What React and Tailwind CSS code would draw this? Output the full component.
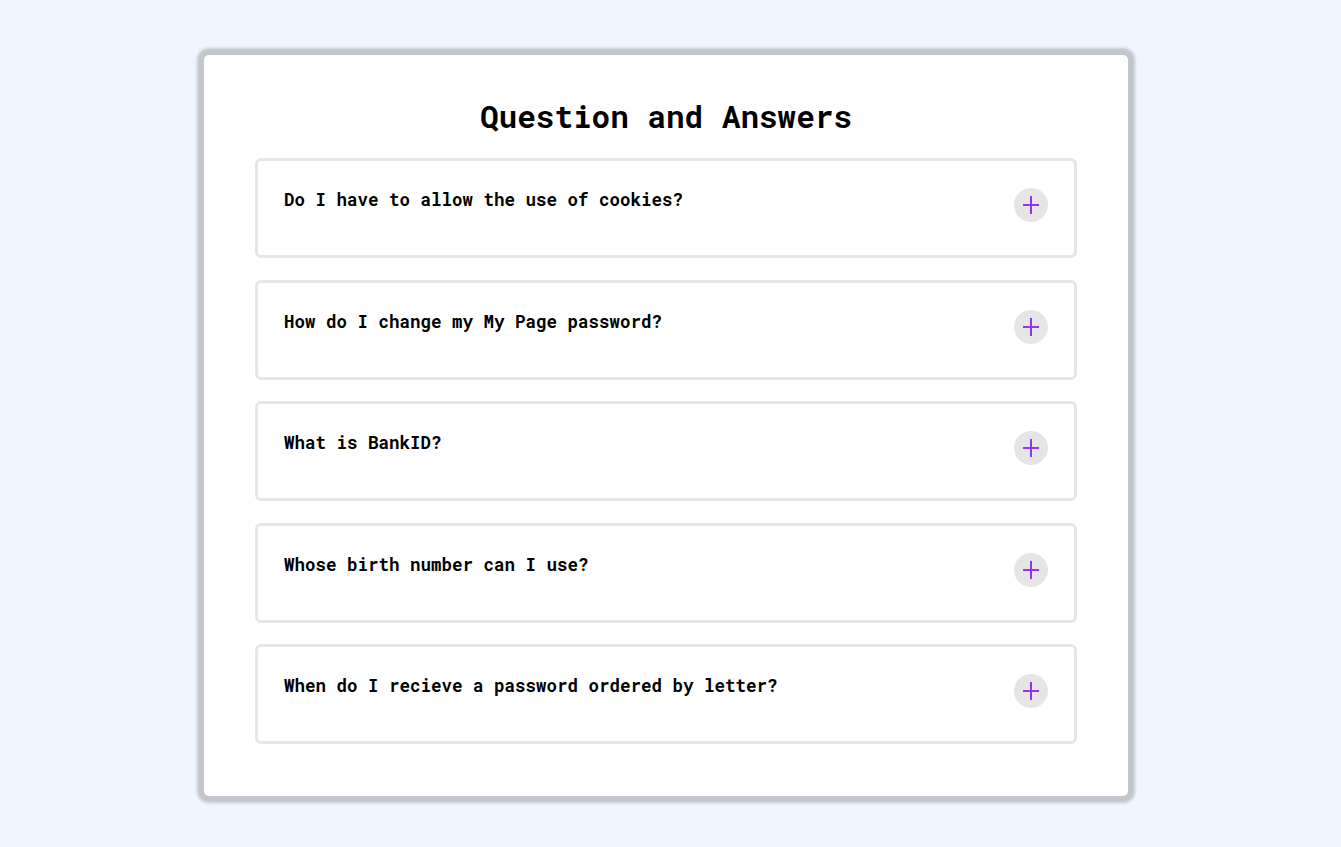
import React, { useState } from 'react';

const questions = [
  { q: 'Do I have to allow the use of cookies?', a: 'No, but some parts of the site may not work without them.' },
  { q: 'How do I change my My Page password?', a: 'Log in to My Page and open your account settings.' },
  { q: 'What is BankID?', a: 'BankID is an electronic identification used by banks.' },
  { q: 'Whose birth number can I use?', a: 'You can only use your own birth number.' },
  { q: 'When do I recieve a password ordered by letter?', a: 'Usually within 3-5 working days.' },
];

const mono = { fontFamily: '"Roboto Mono", "DejaVu Sans Mono", "Liberation Mono", monospace' };

const FaqItem = ({ item }) => {
  const [open, setOpen] = useState(false);

  return (
    <div className="min-h-[100px] border-[3px] border-[#e6e6e6] rounded-md bg-white px-[26px] pt-[26px] pb-4">
      <div className="flex items-start justify-between">
        <h3 className="text-[17.5px] leading-[26px] font-bold text-black">{item.q}</h3>
        <button
          onClick={() => setOpen(!open)}
          className="mt-[1px] w-[34px] h-[34px] rounded-full bg-[#e5e5e5] flex items-center justify-center shrink-0"
        >
          <svg width="16" height="18" viewBox="0 0 16 18">
            {open ? (
              <path d="M0 9h16" stroke="#9333ea" strokeWidth="2" />
            ) : (
              <path d="M0 9h16M8 0v18" stroke="#9333ea" strokeWidth="2" />
            )}
          </svg>
        </button>
      </div>
      {open && <p className="mt-3 text-[15px] text-gray-700">{item.a}</p>}
    </div>
  );
};

export default function App() {
  return (
    <div className="min-h-screen bg-[#eff6ff] flex justify-center pt-[55px] pr-[9px] pb-10" style={mono}>
      <div className="w-[924px] self-start bg-white rounded-[5px] shadow-[0_0_3px_7px_#c2c6cc] px-[51px] pt-[43px] pb-[52px]">
        <h1 className="text-center text-[31px] leading-[37px] font-bold text-black mb-[23px]">
          Question and Answers
        </h1>
        <div className="flex flex-col gap-[21.5px]">
          {questions.map(item => (
            <FaqItem key={item.q} item={item} />
          ))}
        </div>
      </div>
    </div>
  );
}
